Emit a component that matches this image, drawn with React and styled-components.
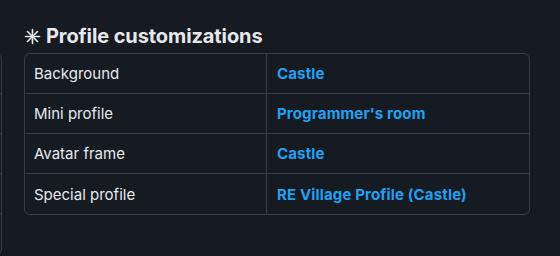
import React from 'react';
import styled, { createGlobalStyle } from 'styled-components';

const GlobalStyle = createGlobalStyle`
  html, body {
    margin: 0;
    padding: 0;
    background: #161a21;
    overflow: hidden;
  }
  body {
    font-family: Inter, "Noto Sans", "Liberation Sans", sans-serif;
    color: #e6e9ed;
  }
`;

const Page = styled.div`
  display: flex;
  align-items: flex-start;
  gap: 22px;
  height: 256px;
  padding-top: 24px;
  box-sizing: border-box;
`;

const GhostColumn = styled.div`
  width: 220px;
  margin-left: -218px;
  padding-top: 29px;
`;

const Section = styled.section`
  display: flex;
  flex-direction: column;
  gap: 5px;
`;

const Heading = styled.h2`
  display: flex;
  align-items: center;
  gap: 5px;
  margin: 0;
  font-size: 20px;
  line-height: 24px;
  font-weight: 700;
  color: #e6e8eb;
  letter-spacing: -0.1px;
`;

const Table = styled.div`
  display: grid;
  grid-template-columns: ${(p) => p.$cols};
  border: 1px solid #363e4c;
  border-radius: 6px;
  overflow: hidden;
`;

const Cell = styled.div`
  height: 40px;
  box-sizing: border-box;
  display: flex;
  align-items: center;
  padding: 0 9px;
  font-size: 15px;
  border-bottom: ${(p) => (p.$last ? 'none' : '1px solid #363e4c')};
  border-right: ${(p) => (p.$divider ? '1px solid #363e4c' : 'none')};
  ${(p) =>
    p.$link &&
    `
    color: #1ea2f4;
    font-weight: 700;
    padding-left: 10px;
    letter-spacing: 0.15px;
  `}
`;

const Spark = () => (
  <svg width="17" height="17" viewBox="0 0 17 17" fill="none" stroke="#e6e8eb" strokeWidth="1.6" strokeLinecap="round">
    <line x1="8.5" y1="1.5" x2="8.5" y2="15.5" />
    <line x1="1.5" y1="8.5" x2="15.5" y2="8.5" />
    <line x1="3.5" y1="3.5" x2="13.5" y2="13.5" />
    <line x1="13.5" y1="3.5" x2="3.5" y2="13.5" />
  </svg>
);

const rows = [
  ['Background', 'Castle'],
  ['Mini profile', "Programmer's room"],
  ['Avatar frame', 'Castle'],
  ['Special profile', 'RE Village Profile (Castle)'],
];

export default function App() {
  return (
    <>
      <GlobalStyle />
      <Page>
        <GhostColumn>
          <Table $cols="1fr">
            {[0, 1, 2, 3, 4].map((i) => (
              <Cell key={i} />
            ))}
          </Table>
        </GhostColumn>
        <Section>
          <Heading>
            <Spark />
            Profile customizations
          </Heading>
          <Table $cols="242px 262px">
            {rows.map(([label, value], i) => (
              <React.Fragment key={label}>
                <Cell $divider $last={i === rows.length - 1}>{label}</Cell>
                <Cell $link $last={i === rows.length - 1}>{value}</Cell>
              </React.Fragment>
            ))}
          </Table>
        </Section>
      </Page>
    </>
  );
}
